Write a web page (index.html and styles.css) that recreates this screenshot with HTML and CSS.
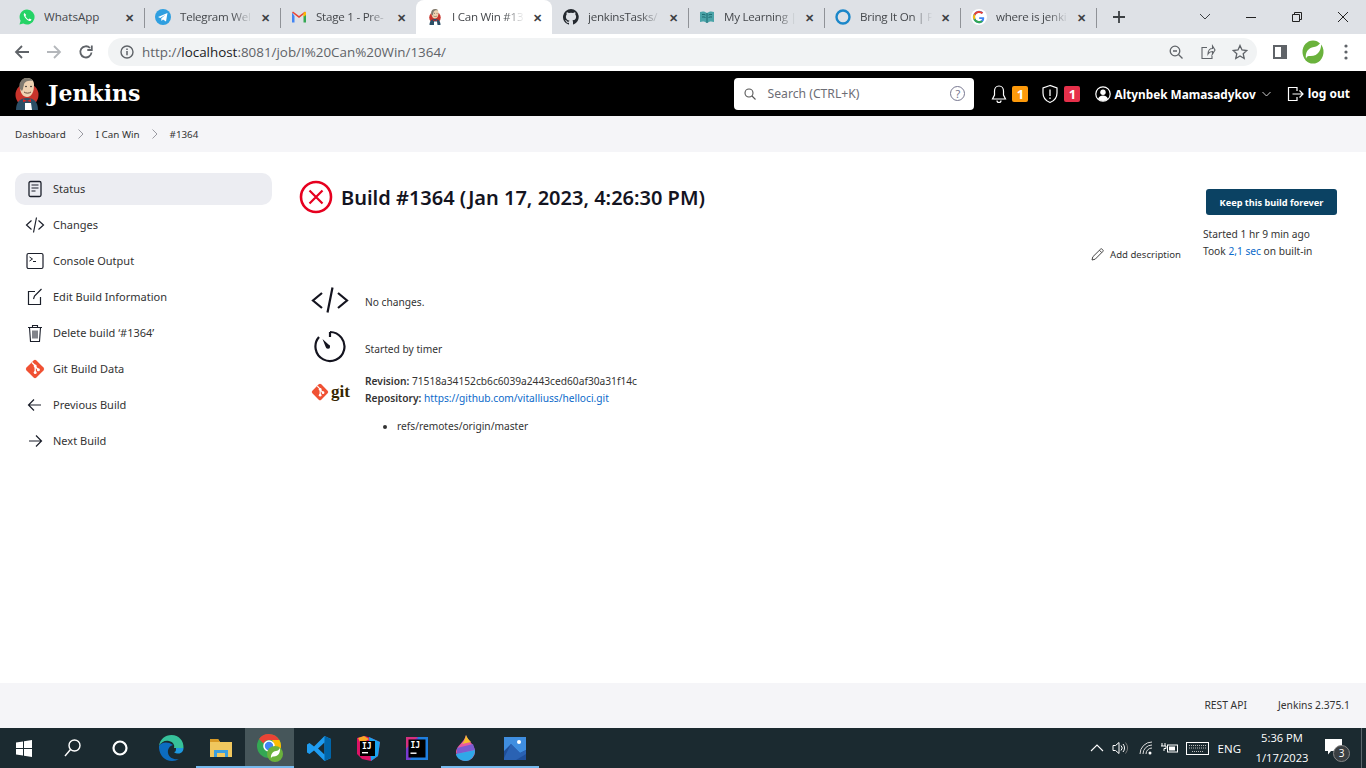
FILE: index.html
```html
<!DOCTYPE html>
<html>
	<head>
		<meta charset="UTF-8">
		<title>I Can Win #1364</title>
		<link rel="stylesheet" href="styles.css">
	</head>
	<body>
		<svg class="defs" width="0" height="0">
			<symbol id="butler" viewBox="0 0 24 32">
				<circle cx="12" cy="17" r="11.500" fill="#c8332b"/>
				<path d="M1 32c0-8 4-12 11-12s11 4 11 12z" fill="#2c4f66"/>
				<path d="M5 9c0-6 3-9 7-9s7 2 7 7c0 6-2 12-7 12-4 0-7-4-7-10z" fill="#eed2b2"/>
				<path d="M5 11C3 6 6 0 12 0c3 0 5 1 6 3-4-1-8 0-9 3 0 2-1 3-1 5l-1 2z" fill="#7f7a70"/>
				<path d="M8 21l4 2 4-2v3l-4-1-4 1z" fill="#d22"/>
				<path d="M9 14c2 1.500 5 1.500 7 0" fill="none" stroke="#5a3a2a" stroke-width=".9"/>
				<circle cx="11" cy="8.500" r=".8" fill="#222"/>
				<circle cx="16" cy="8.500" r=".8" fill="#222"/>
				<path d="M10 25h6l1 7h-7z" fill="#fff"/>
			</symbol>
			<symbol id="gitmark" viewBox="0 0 20 20">
				<rect x="3" y="3" width="14" height="14" rx="2" transform="rotate(45 10 10)" fill="#f05133"/>
				<path d="M7 3.500l3.200 3.200v7M10.200 7.500l3.200 3.200" fill="none" stroke="#fff" stroke-width="1.300"/>
				<circle cx="10.200" cy="7" r="1.500" fill="#fff"/>
				<circle cx="10.200" cy="13.500" r="1.500" fill="#fff"/>
				<circle cx="13.400" cy="10.700" r="1.500" fill="#fff"/>
			</symbol>
		</svg>

		<div class="tabstrip">
			<div class="tab">
				<svg class="favicon" viewBox="0 0 16 16"><path d="M8 .500a7.500 7.500 0 0 0-6.400 11.300L.5 15.500l3.800-1A7.500 7.500 0 1 0 8 .5z" fill="#25d366"/><path d="M5.500 4c-1 .7-1 2 0 3.800s2.800 3.700 4.700 4.200c1.200.3 2.200-.5 2.300-1.500l-2-1-.9 1C8.500 10 7 8.500 6.400 7l.8-1z" fill="#fff"/></svg>
				<span class="tab-title plain">WhatsApp</span><span class="tab-x">✕</span>
			</div>
			<div class="tab">
				<svg class="favicon" viewBox="0 0 16 16"><circle cx="8" cy="8" r="8" fill="#2f9fe0"/><path d="M3 8l9.500-4-1.500 8.500-3-2-1.500 1.500-.3-2.500 4.300-3.700-5.300 3.200z" fill="#fff"/></svg>
				<span class="tab-title">Telegram Wel</span><span class="tab-x">✕</span>
			</div>
			<div class="tab">
				<svg class="favicon" viewBox="0 0 16 16"><path d="M1 3.500v10h2.500V7z" fill="#4285f4"/><path d="M15 3.500v10h-2.500V7z" fill="#34a853"/><path d="M1 3.500L8 9l7-5.500-1-1-6 4.500-6-4.500z" fill="#ea4335"/><path d="M12.500 3.500L15 3v3l-2.500 2z" fill="#fbbc04"/></svg>
				<span class="tab-title">Stage 1 - Pre-</span><span class="tab-x">✕</span>
			</div>
			<div class="tab active">
				<svg class="favicon" viewBox="0 0 24 32"><use href="#butler"/></svg>
				<span class="tab-title">I Can Win #13</span><span class="tab-x">✕</span>
			</div>
			<div class="tab">
				<svg class="favicon" viewBox="0 0 16 16"><path d="M8 0a8 8 0 0 0-2.500 15.600c.4.100.5-.2.500-.4v-1.400c-2.200.5-2.700-1-2.700-1-.4-.9-.9-1.200-.9-1.200-.7-.5.100-.5.100-.5.800.1 1.200.8 1.200.8.700 1.200 1.900.9 2.300.7.100-.5.300-.9.500-1.100-1.800-.2-3.600-.9-3.600-4 0-.9.300-1.600.8-2.100-.1-.2-.4-1 .1-2.100 0 0 .7-.2 2.200.8a7.500 7.500 0 0 1 4 0c1.500-1 2.200-.8 2.200-.8.400 1.100.2 1.900.1 2.100.5.600.8 1.300.8 2.100 0 3.100-1.900 3.700-3.700 3.900.3.300.6.700.6 1.500v2.200c0 .2.100.5.500.4A8 8 0 0 0 8 0z" fill="#24292f"/></svg>
				<span class="tab-title">jenkinsTasks/</span><span class="tab-x">✕</span>
			</div>
			<div class="tab">
				<svg class="favicon" viewBox="0 0 16 16"><path d="M1 3c3-1 5-.5 7 1 2-1.500 4-2 7-1v10c-3-1-5-.5-7 1-2-1.500-4-2-7-1z" fill="#4aa3a8"/><path d="M8 4v10M3 5.500c1.500-.3 2.500 0 3.500.5M3 8c1.500-.3 2.500 0 3.500.5M9.500 6c1-.5 2-.8 3.500-.5M9.500 8.500c1-.5 2-.8 3.500-.5" stroke="#1d6b70" fill="none"/></svg>
				<span class="tab-title">My Learning |</span><span class="tab-x">✕</span>
			</div>
			<div class="tab">
				<svg class="favicon" viewBox="0 0 16 16"><circle cx="8" cy="8" r="6.500" fill="none" stroke="#1b87c9" stroke-width="2.400"/></svg>
				<span class="tab-title">Bring It On | P</span><span class="tab-x">✕</span>
			</div>
			<div class="tab">
				<svg class="favicon" viewBox="0 0 16 16"><circle cx="8" cy="8" r="8" fill="#fff"/><path d="M13 8.200H8.200v1.900H11c-.3 1.300-1.400 2.100-2.800 2.100a4.200 4.200 0 0 1 0-8.400c1 0 1.900.4 2.600 1l1.400-1.400A6.200 6.200 0 1 0 8.200 14.200c3.300 0 5-2.400 5-5 0-.4 0-.7-.2-1z" fill="#4285f4"/><path d="M2.700 5.100l1.700 1.200a4.200 4.200 0 0 1 6.400-1.300l1.400-1.400a6.200 6.200 0 0 0-9.500 1.500z" fill="#ea4335"/><path d="M4.200 9.400l-1.700 1.300a6.200 6.200 0 0 0 9.500 2l-1.700-1.300a4.200 4.200 0 0 1-6.100-2z" fill="#34a853"/><path d="M2.700 5.100a6.200 6.200 0 0 0 0 5.600l1.700-1.300a4.200 4.200 0 0 1 0-3.100z" fill="#fbbc04"/></svg>
				<span class="tab-title">where is jenki</span><span class="tab-x">✕</span>
			</div>
			<svg class="newtab" width="14" height="14" viewBox="0 0 14 14"><path d="M7 1v12M1 7h12" stroke="#3c4043" stroke-width="1.800"/></svg>
			<div class="winctl">
				<svg width="46" height="14" viewBox="0 0 46 14"><path d="M18 4l5 5 5-5" fill="none" stroke="#3c4043"/></svg>
				<svg width="46" height="14" viewBox="0 0 46 14"><path d="M18 7.500h10" stroke="#222"/></svg>
				<svg width="46" height="14" viewBox="0 0 46 14"><path d="M18.500 4.500h7v7h-7zM20.500 4.500v-2h7v7h-2" fill="none" stroke="#222"/></svg>
				<svg width="46" height="14" viewBox="0 0 46 14"><path d="M18 2l10 10M28 2L18 12" stroke="#222"/></svg>
			</div>
		</div>

		<div class="toolbar">
			<svg class="tool-btn" width="16" height="16" viewBox="0 0 16 16"><path d="M15 8H2M8 2L2 8l6 6" fill="none" stroke="#5f6368" stroke-width="1.800"/></svg>
			<svg class="tool-btn" width="16" height="16" viewBox="0 0 16 16"><path d="M1 8h13M8 2l6 6-6 6" fill="none" stroke="#b4b7bb" stroke-width="1.800"/></svg>
			<svg class="tool-btn" width="16" height="16" viewBox="0 0 16 16"><path d="M13.500 8.500A5.600 5.600 0 1 1 12 4M13.800 1.500V6H9.300" fill="none" stroke="#5f6368" stroke-width="1.800"/></svg>
			<div class="omnibox">
				<svg width="14" height="14" viewBox="0 0 14 14"><circle cx="7" cy="7" r="6" fill="none" stroke="#5f6368" stroke-width="1.400"/><path d="M7 6v4.200M7 3.500v1.500" stroke="#5f6368" stroke-width="1.500"/></svg>
				<span class="url"><span class="url-dim">http://</span>localhost<span class="url-dim">:8081/job/I%20Can%20Win/1364/</span></span>
				<svg class="omni-icon" width="16" height="16" viewBox="0 0 16 16"><circle cx="7" cy="7" r="4.800" fill="none" stroke="#5f6368" stroke-width="1.300"/><path d="M10.500 10.500L14.500 14.500M5 7h4" stroke="#5f6368" stroke-width="1.300"/></svg>
				<svg class="omni-icon" width="16" height="16" viewBox="0 0 16 16"><path d="M7 3.500H2v11h10v-4M8 10c0-4 2-5.500 4.500-5.500V2L15 6l-2.500 4V7.500C10.500 7.500 9 8.300 8 10z" fill="none" stroke="#5f6368" stroke-width="1.100"/></svg>
				<svg class="omni-icon" width="16" height="16" viewBox="0 0 16 16"><path d="M8 1.500l2 4.500 4.800.5-3.600 3.200 1 4.800L8 12l-4.200 2.500 1-4.800L1.200 6.500 6 6z" fill="none" stroke="#5f6368" stroke-width="1.300"/></svg>
			</div>
			<svg class="side-panel" width="14" height="14" viewBox="0 0 14 14"><rect x="1" y="1" width="12" height="12" fill="none" stroke="#5f6368" stroke-width="2"/><rect x="8" y="1" width="5" height="12" fill="#5f6368"/></svg>
			<svg class="spring-ext" width="22" height="24" viewBox="0 0 22 24"><ellipse cx="11" cy="12" rx="10.500" ry="11.500" fill="#6ab23c"/><path d="M19 2c1 8-3 15-12 14-2 0-3 2-3 3-1-7 2-11 8-12 3-.5 5-2 7-5z" fill="#fff"/></svg>
			<svg class="menu-dots" width="4" height="18" viewBox="0 0 4 18"><circle cx="2" cy="3" r="1.600" fill="#5f6368"/><circle cx="2" cy="9" r="1.600" fill="#5f6368"/><circle cx="2" cy="15" r="1.600" fill="#5f6368"/></svg>
		</div>

		<header class="jenkins-head">
			<svg class="head-logo" width="24" height="32" viewBox="0 0 24 32"><use href="#butler"/></svg>
			<span class="logotype">Jenkins</span>
			<div class="search">
				<svg width="12" height="12" viewBox="0 0 12 12"><circle cx="5" cy="5" r="4" fill="none" stroke="#555" stroke-width="1.100"/><path d="M8 8l3.500 3.500" stroke="#555" stroke-width="1.100"/></svg>
				<span class="search-text">Search (CTRL+K)</span>
				<span class="search-help">?</span>
			</div>
			<div class="head-item">
				<svg width="16" height="20" viewBox="0 0 16 20"><path d="M8 2c-3 0-4.500 2.500-4.500 5v4L1.500 15h13l-2-4V7C12.500 4.500 11 2 8 2zM6 16.500a2 2 0 0 0 4 0" fill="none" stroke="#fff" stroke-width="1.200"/></svg>
				<span class="badge badge-warn">1</span>
			</div>
			<div class="head-item">
				<svg width="18" height="20" viewBox="0 0 18 20"><path d="M9 1.500L2 4v5c0 5 3 8 7 9.500 4-1.500 7-4.500 7-9.500V4z" fill="none" stroke="#fff" stroke-width="1.200"/><path d="M9 5.500v6.500M9 13.500v1.500" stroke="#fff" stroke-width="1.300"/></svg>
				<span class="badge badge-danger">1</span>
			</div>
			<div class="head-user">
				<svg width="16" height="16" viewBox="0 0 16 16"><circle cx="8" cy="8" r="7.200" fill="none" stroke="#fff" stroke-width="1.200"/><circle cx="8" cy="6.300" r="2.700" fill="#fff"/><path d="M3 13c1-3 3-3.500 5-3.500s4 .5 5 3.500c-3 2.500-7 2.500-10 0z" fill="#fff"/></svg>
				<span>Altynbek Mamasadykov</span>
				<svg class="user-caret" width="9" height="6" viewBox="0 0 9 6"><path d="M.5 1l4 4 4-4" fill="none" stroke="#ccc"/></svg>
			</div>
			<div class="head-logout">
				<svg width="17" height="16" viewBox="0 0 17 16"><path d="M10 5V1.500H1.500v13H10V11M5.500 8H16M12.500 4.500L16 8l-3.500 3.500" fill="none" stroke="#fff" stroke-width="1.200"/></svg>
				<span>log out</span>
			</div>
		</header>

		<nav class="crumbs">
			<span>Dashboard</span>
			<svg class="crumb-sep" width="6" height="10" viewBox="0 0 6 10"><path d="M.5.500L5 5 .5 9.500" fill="none" stroke="#9a9aa2"/></svg>
			<span>I Can Win</span>
			<svg class="crumb-sep" width="6" height="10" viewBox="0 0 6 10"><path d="M.5.500L5 5 .5 9.500" fill="none" stroke="#9a9aa2"/></svg>
			<span>#1364</span>
		</nav>

		<main class="page">
			<aside class="sidebar">
				<div class="side-item current">
					<svg width="20" height="20" viewBox="0 0 20 20"><rect x="4" y="2.500" width="12" height="15" rx="1.500" fill="none" stroke="#1b1f2a" stroke-width="1.300"/><path d="M6.500 6h7M6.500 9h7M6.500 12h4" stroke="#1b1f2a" stroke-width="1.100"/></svg>
					<span>Status</span>
				</div>
				<div class="side-item">
					<svg width="20" height="20" viewBox="0 0 20 20"><path d="M6.500 5.500L1.500 10l5 4.500M13.500 5.500l5 4.500-5 4.500M11.500 2.500l-3 15" fill="none" stroke="#1b1f2a" stroke-width="1.200"/></svg>
					<span>Changes</span>
				</div>
				<div class="side-item">
					<svg width="20" height="20" viewBox="0 0 20 20"><rect x="2" y="2.500" width="16" height="15" rx="1.500" fill="none" stroke="#1b1f2a" stroke-width="1.200"/><path d="M4.500 6l3 2-3 2M8 10.500h3" fill="none" stroke="#1b1f2a" stroke-width="1"/></svg>
					<span>Console Output</span>
				</div>
				<div class="side-item">
					<svg width="20" height="20" viewBox="0 0 20 20"><path d="M10 4.500H3.500v13h12V10" fill="none" stroke="#1b1f2a" stroke-width="1.200"/><path d="M8.500 12l1 -3 7 -7" fill="none" stroke="#1b1f2a" stroke-width="1.200"/></svg>
					<span>Edit Build Information</span>
				</div>
				<div class="side-item">
					<svg width="20" height="20" viewBox="0 0 20 20"><path d="M3 4.500h14M7.500 4.500V2.500h5v2M4.500 4.500l1 14h9l1-14M8 7.500v8M10 7.500v8M12 7.500v8" fill="none" stroke="#1b1f2a" stroke-width="1.100"/></svg>
					<span>Delete build ‘#1364’</span>
				</div>
				<div class="side-item">
					<svg width="20" height="20" viewBox="0 0 20 20"><use href="#gitmark"/></svg>
					<span>Git Build Data</span>
				</div>
				<div class="side-item">
					<svg width="20" height="20" viewBox="0 0 20 20"><path d="M16 10H3.500M9 4.500L3.500 10 9 15.500" fill="none" stroke="#1b1f2a" stroke-width="1.200"/></svg>
					<span>Previous Build</span>
				</div>
				<div class="side-item">
					<svg width="20" height="20" viewBox="0 0 20 20"><path d="M4 10h12.500M11 4.500l5.500 5.500-5.500 5.500" fill="none" stroke="#1b1f2a" stroke-width="1.200"/></svg>
					<span>Next Build</span>
				</div>
			</aside>

			<section class="content">
				<div class="build-head">
					<svg width="34" height="34" viewBox="0 0 34 34"><circle cx="17" cy="17" r="15" fill="none" stroke="#e6001f" stroke-width="2.600"/><path d="M10.500 10.500l13 13M23.500 10.500l-13 13" stroke="#e6001f" stroke-width="2.200"/></svg>
					<h1>Build #1364 (Jan 17, 2023, 4:26:30 PM)</h1>
					<div class="build-side">
						<button class="keep-btn">Keep this build forever</button>
						<div class="build-meta">
							<div>Started 1 hr 9 min ago</div>
							<div>Took <a>2,1 sec</a> on built-in</div>
						</div>
					</div>
				</div>
				<div class="add-desc">
					<svg width="13" height="13" viewBox="0 0 13 13"><path d="M1 12l.8-3.200L9.500 1.200a1.200 1.200 0 0 1 1.700 0l.6.6a1.200 1.200 0 0 1 0 1.700L4.200 11.200zM8.500 2.300l2.200 2.200" fill="none" stroke="#444" stroke-width="1"/></svg>
					<span>Add description</span>
				</div>
				<div class="info-row row-changes">
					<svg width="38" height="28" viewBox="0 0 38 28"><path d="M11 7L2 14.500l9 7.500M27 7l9 7.500-9 7.500M21.500 1.500l-5 25" fill="none" stroke="#14141f" stroke-width="2.200"/></svg>
					<div>No changes.</div>
				</div>
				<div class="info-row row-timer">
					<svg width="34" height="34" viewBox="0 0 34 34"><path d="M17 3a14.500 14.500 0 1 1-11 5" fill="none" stroke="#14141f" stroke-width="2.200"/><path d="M17 3v5" stroke="#14141f" stroke-width="2.200"/><path d="M9.500 10l6 5.500a2.200 2.200 0 1 1-2.800 2.500z" fill="#14141f"/></svg>
					<div>Started by timer</div>
				</div>
				<div class="info-row row-git">
					<div class="git-logo">
						<svg width="18" height="18" viewBox="0 0 20 20"><use href="#gitmark"/></svg>
						<span>git</span>
					</div>
					<div class="git-lines">
						<div><b>Revision:</b> 71518a34152cb6c6039a2443ced60af30a31f14c</div>
						<div><b>Repository:</b> <a>https://github.com/vitalliuss/helloci.git</a></div>
						<ul>
							<li>refs/remotes/origin/master</li>
						</ul>
					</div>
				</div>
			</section>
		</main>

		<footer class="foot">
			<span>REST API</span>
			<span>Jenkins 2.375.1</span>
		</footer>

		<div class="taskbar">
			<div class="task-btn">
				<svg width="16" height="17" viewBox="0 0 16 17"><path d="M0 2.500l7-1v6.500H0zM8 1.300L16 0v8H8zM0 9h7v6.500l-7-1zM8 9h8v8l-8-1.300z" fill="#fff"/></svg>
			</div>
			<div class="task-btn">
				<svg width="17" height="18" viewBox="0 0 17 18"><circle cx="10.500" cy="6.500" r="5.500" fill="none" stroke="#fff" stroke-width="1.400"/><path d="M6.500 10.500L1 17" stroke="#fff" stroke-width="1.400"/></svg>
			</div>
			<div class="task-btn">
				<svg width="16" height="16" viewBox="0 0 16 16"><circle cx="8" cy="8" r="6.500" fill="none" stroke="#fff" stroke-width="2.200"/></svg>
			</div>
			<div class="task-btn app">
				<svg width="25" height="26" viewBox="0 0 25 26"><path d="M12.500 0C6 0 .8 4.500 0 11c2-4 6-6 10-5 4 1 6 4 5 7h9.500C25 6 20 0 12.500 0z" fill="#36c19a"/><path d="M0 11c-.5 8 5 15 13 15 3 0 5-1 7-2-5 1-10-1-11-6-.5-3 1-7 5-8-5-4-12-3-14 1z" fill="#0c6cc0"/><path d="M24.500 13c0 3-2 5.500-5 5.500-2 0-3.500-.5-4.500-1.500 2 0 2-2 2-4z" fill="#1d98e0"/></svg>
			</div>
			<div class="task-btn app running">
				<svg width="22" height="20" viewBox="0 0 22 20"><path d="M0 1h8l2 3h12v15H0z" fill="#f0c75e"/><path d="M0 1h8l2 3H0z" fill="#d99a26"/><path d="M4 12h14v7h-3v-4H7v4H4z" fill="#3a9fe0"/></svg>
			</div>
			<div class="task-btn app running current-app">
				<svg width="26" height="28" viewBox="0 0 26 28"><circle cx="12" cy="12" r="12" fill="#34a853"/><path d="M12 0a12 12 0 0 1 10.400 6H12a6 6 0 0 0-5.500 3.500L2 5a12 12 0 0 1 10-5z" fill="#ea4335"/><path d="M22.400 6a12 12 0 0 1-5 16.700L12 18a6 6 0 0 0 5-6c0-2-1-4.500-2-6z" fill="#fbbc04"/><circle cx="12" cy="12" r="5" fill="#4285f4" stroke="#fff" stroke-width="1.600"/><circle cx="18" cy="20" r="8" fill="#6ab23c"/><path d="M23 14c.5 5-2 9-7 8.500-1 0-2 1-2 2-.5-4 1.500-7 5-7.500 1.500-.3 3-1 4-3z" fill="#fff"/></svg>
			</div>
			<div class="task-btn app">
				<svg width="24" height="25" viewBox="0 0 24 25"><path d="M17.500 0L24 3v19l-6.500 3L7 14.500 2.500 18 0 16.500V8.500L2.500 7 7 10.500z" fill="#1f9cf0"/><path d="M17.500 6.500l-6.500 6 6.500 6z" fill="#1b2a30"/><path d="M17.500 0v25L24 22V3z" fill="#0065a9"/></svg>
			</div>
			<div class="task-btn app">
				<svg width="24" height="25" viewBox="0 0 24 25"><path d="M1 2l8-2 6 2 9 4-2 14-7 5-9-2-5-5z" fill="#dd1265"/><path d="M13 1l11 5-2 14-7 5z" fill="#1aa3f0"/><path d="M2 2l6-2 5 3-8 5z" fill="#f9a825"/><rect x="4" y="5" width="15" height="15" fill="#000"/><text class="ij" x="6" y="13">IJ</text><rect x="6" y="16" width="6" height="1.400" fill="#fff"/></svg>
			</div>
			<div class="task-btn app">
				<svg width="22" height="23" viewBox="0 0 22 23"><rect width="22" height="23" fill="#1f7fe0"/><path d="M0 0h12L0 12z" fill="#d6307f"/><path d="M0 12L12 0v4L4 23H0z" fill="#7a3bd0"/><rect x="2.500" y="2.500" width="17" height="18" fill="#000"/><text class="ij" x="4.500" y="10.500">IJ</text><rect x="4.500" y="15.500" width="6" height="1.400" fill="#fff"/></svg>
			</div>
			<div class="task-btn app running">
				<svg width="19" height="26" viewBox="0 0 19 26"><path d="M10 0c1 5 9 9 9 17a9.500 9 0 0 1-19 0C0 11 8 8 10 0z" fill="#e85aa0"/><path d="M10 0c1 3 3 5 5 7l-9 2c2-2 3-5 4-9z" fill="#f5c02c"/><path d="M1 13l16-4 2 6-18 4z" fill="#7d5bd0"/><path d="M0 19l19-4c0 6-4 11-9.500 11S0 22 0 19z" fill="#2fa8e8"/></svg>
			</div>
			<div class="task-btn app running">
				<svg width="22" height="23" viewBox="0 0 22 23"><rect width="22" height="23" fill="#3f8ee0"/><path d="M0 23V14l7-7 9 9 6-3v10z" fill="#1f4f9a"/><path d="M7 7l9 9 6-3v4L12 23H0v-2z" fill="#2a62b3"/><circle cx="15" cy="5" r="2" fill="#fff"/></svg>
			</div>
			<div class="tray">
				<svg class="tray-chev" width="14" height="8" viewBox="0 0 14 8"><path d="M1 7l6-6 6 6" fill="none" stroke="#fff" stroke-width="1.100"/></svg>
				<svg class="tray-vol" width="17" height="14" viewBox="0 0 17 14"><path d="M1 4.500h2.500L7 1.500v11l-3.500-3H1zM9 4.500a3.500 3.500 0 0 1 0 5M11 3a6 6 0 0 1 0 8" fill="none" stroke="#fff"/><path d="M13.500 1.500a9 9 0 0 1 0 11" fill="none" stroke="#777"/></svg>
				<svg class="tray-wifi" width="14" height="14" viewBox="0 0 14 14"><path d="M1 13A12 12 0 0 1 13 1M4 13a9 9 0 0 1 9-9M7 13a6 6 0 0 1 6-6" fill="none" stroke="#ddd"/><circle cx="11" cy="12" r="1.500" fill="#fff"/></svg>
				<svg class="tray-batt" width="18" height="12" viewBox="0 0 18 12"><path d="M1 1v3M4 1v3M0 4h5v2.500H3V9" fill="none" stroke="#fff"/><rect x="6.500" y="3" width="10" height="7" fill="none" stroke="#fff"/><rect x="8" y="4.500" width="6" height="4" fill="#fff"/></svg>
				<svg class="tray-kbd" width="23" height="13" viewBox="0 0 23 13"><rect x=".5" y=".5" width="22" height="12" fill="none" stroke="#fff"/><path d="M3 3.500h17M3 6h17M6 9.500h11" stroke="#bbb" stroke-dasharray="1 1"/></svg>
				<span class="tray-lang">ENG</span>
				<div class="clock">
					<div>5:36 PM</div>
					<div>1/17/2023</div>
				</div>
				<div class="notify">
					<svg width="17" height="16" viewBox="0 0 17 16"><path d="M0 0h17v12H6l-3 3.500V12H0z" fill="#fff"/></svg>
					<span class="notify-count">3</span>
				</div>
				<div class="show-desktop"></div>
			</div>
		</div>
	</body>
</html>
```

FILE: styles.css
```css
* {
	padding: 0;
	margin: 0;
	box-sizing: border-box;
}

html, body {
	height: 100%;
	overflow: hidden;
}

body {
	width: 1366px;
	height: 768px;
	display: flex;
	flex-direction: column;
	font-family: "Noto Sans", "Liberation Sans", sans-serif;
	color: #333;
	background: #fff;
}

.defs {
	position: absolute;
}

svg {
	flex-shrink: 0;
}

/* browser chrome */
.tabstrip {
	height: 34px;
	flex-shrink: 0;
	background: #dee1e6;
	display: flex;
	align-items: center;
	padding-left: 8px;
	font: 11.600px "Open Sans", "Liberation Sans", sans-serif;
	color: #45484c;
}

.tab {
	width: 136px;
	height: 34px;
	display: flex;
	align-items: center;
	padding: 0 8px 0 11px;
	position: relative;
	flex-shrink: 0;
}

.tab::after {
	content: "";
	position: absolute;
	right: -1px;
	top: 8px;
	height: 20px;
	width: 1px;
	background: #8f9297;
}

.tab.active {
	background: #fff;
	border-radius: 8px 8px 0 0;
}

.tab.active::after, .tab:nth-child(3)::after {
	display: none;
}

.favicon {
	width: 16px;
	height: 16px;
	margin-right: 9px;
}

.tab-title {
	flex: 1;
	overflow: hidden;
	white-space: nowrap;
	letter-spacing: -.25px;
	padding-bottom: 2px;
	-webkit-mask-image: linear-gradient(90deg, #000 70%, transparent 98%);
	mask-image: linear-gradient(90deg, #000 70%, transparent 98%);
}

.tab-title.plain {
	letter-spacing: 0;
	-webkit-mask-image: none;
	mask-image: none;
}

.tab-x {
	width: 14px;
	font-size: 11px;
	font-weight: 700;
	text-align: center;
	color: #3c4043;
	margin-left: 4px;
}

.newtab {
	margin-left: 16px;
}

.winctl {
	margin-left: auto;
	display: flex;
}

.toolbar {
	height: 36px;
	flex-shrink: 0;
	background: #fff;
	display: flex;
	align-items: center;
	padding-left: 14px;
}

.tool-btn {
	margin-right: 16px;
}

.omnibox {
	width: 1149px;
	height: 28px;
	margin-left: -2px;
	background: #f1f3f4;
	border-radius: 14px;
	display: flex;
	align-items: center;
	padding: 0 9px 0 12px;
	font: 13.400px "Open Sans", "Liberation Sans", sans-serif;
}

.url {
	margin-left: 8px;
	flex: 1;
	color: #202124;
}

.url-dim {
	color: #5f6368;
}

.omni-icon {
	margin-left: 16px;
}

.side-panel {
	margin-left: 16px;
}

.spring-ext {
	margin-left: 15px;
}

.menu-dots {
	margin-left: 20px;
}

/* jenkins header */
.jenkins-head {
	height: 46px;
	flex-shrink: 0;
	background: #000;
	border-top: 1px solid #fff;
	display: flex;
	align-items: center;
	padding: 0 16px 0 15px;
	color: #fff;
	font-size: 13px;
}

.logotype {
	font: 700 22px "DejaVu Serif", "Liberation Serif", serif;
	margin-left: 9px;
	padding-bottom: 2px;
}

.search {
	width: 240px;
	height: 32px;
	margin-left: auto;
	background: #fff;
	border-radius: 4px;
	display: flex;
	align-items: center;
	padding: 0 9px 0 10px;
	color: #6d6d75;
	font-size: 12.200px;
}

.search-text {
	margin-left: 11px;
	flex: 1;
}

.search-help {
	width: 15px;
	height: 15px;
	border: 1px solid #777790;
	border-radius: 50%;
	font-size: 11px;
	line-height: 13px;
	text-align: center;
	color: #777790;
}

.head-item {
	display: flex;
	align-items: center;
	margin-left: 17px;
	gap: 5px;
}

.head-item + .head-item {
	margin-left: 13px;
}

.badge {
	width: 16px;
	height: 16px;
	border-radius: 2px;
	font-size: 13px;
	font-weight: 700;
	line-height: 16px;
	text-align: center;
	color: #fff;
}

.badge-warn {
	background: #fe9a0b;
}

.badge-danger {
	background: #e6304a;
}

.head-user {
	display: flex;
	align-items: center;
	margin-left: 15px;
	font-weight: 700;
	font-size: 11.800px;
	white-space: nowrap;
}

.head-user span {
	margin-left: 3px;
}

.user-caret {
	margin-left: 6px;
}

.head-logout {
	display: flex;
	align-items: center;
	margin-left: 16px;
	font-weight: 700;
	font-size: 12px;
}

.head-logout span {
	margin-left: 4px;
}

.crumbs {
	height: 36px;
	flex-shrink: 0;
	background: #f5f5f8;
	display: flex;
	align-items: center;
	padding-left: 15px;
	font-size: 9.800px;
	color: #333;
}

.crumb-sep {
	margin: 0 12px;
}

/* page */
.page {
	flex: 1;
	display: flex;
	min-height: 0;
}

.sidebar {
	width: 272px;
	padding: 21px 0 0 15px;
	flex-shrink: 0;
	display: flex;
	flex-direction: column;
	gap: 4px;
	font-size: 11px;
	color: #333;
}

.side-item {
	height: 32px;
	display: flex;
	align-items: center;
	padding-left: 10px;
	gap: 8px;
	border-radius: 10px;
}

.side-item span {
	padding-bottom: 2px;
}

.side-item.current {
	background: #ecedf2;
}

.content {
	flex: 1;
	padding: 0 29px 0 27px;
	font-size: 10.200px;
	color: #333;
}

.build-head {
	display: flex;
	align-items: flex-start;
	padding-top: 28px;
	height: 94px;
}

.build-head h1 {
	font-size: 20px;
	font-weight: 600;
	color: #14141f;
	margin-left: 8px;
	line-height: 36px;
	white-space: nowrap;
}

.build-side {
	margin-left: auto;
	margin-top: 9px;
	width: 134px;
}

.keep-btn {
	display: block;
	width: 131px;
	height: 26px;
	margin-left: 3px;
	background: #0b4263;
	color: #fff;
	border: none;
	border-radius: 3px;
	font: 700 9.200px "Noto Sans", sans-serif;
}

.build-meta {
	margin-top: 11px;
	line-height: 17px;
}

.build-meta a, .git-lines a {
	color: #0b6aca;
}

.add-desc {
	display: flex;
	align-items: center;
	justify-content: flex-end;
	gap: 6px;
	margin: 1px 156px 0 0;
	height: 14px;
	font-size: 9.600px;
}

.info-row {
	display: flex;
	align-items: center;
}

.info-row > svg, .git-logo {
	width: 38px;
	margin-left: 12px;
	margin-right: 16px;
}

.row-changes {
	margin-top: 26px;
	height: 30px;
}

.row-changes > svg {
	margin-bottom: 4px;
}

.row-timer {
	margin-top: 15px;
	height: 34px;
}

.row-timer > svg {
	margin-bottom: 6px;
}

.row-git {
	margin-top: 7px;
	align-items: flex-start;
}

.git-logo {
	display: flex;
	align-items: center;
	margin-top: 9px;
}

.git-logo span {
	font: 700 17px "Liberation Serif", serif;
	color: #362701;
	margin-left: 2px;
}

.git-lines {
	line-height: 17px;
}

.git-lines b {
	font-weight: 600;
}

.git-lines ul {
	margin: 11px 0 0 32px;
}

/* footer */
.foot {
	height: 45px;
	flex-shrink: 0;
	background: #f5f5f8;
	display: flex;
	align-items: center;
	justify-content: flex-end;
	gap: 31px;
	padding: 0 16px 2px 0;
	font-size: 10.300px;
	color: #333;
}

/* windows taskbar */
.taskbar {
	height: 40px;
	flex-shrink: 0;
	background: #1b2a30;
	display: flex;
	align-items: stretch;
}

.task-btn {
	width: 48px;
	display: flex;
	align-items: center;
	justify-content: center;
}

.task-btn.app {
	width: 49px;
}

.task-btn:nth-child(4) {
	margin-left: 3px;
}

.running {
	box-shadow: inset 0 -2px 0 #76b9ed;
}

.current-app {
	background: #46565a;
}

.ij {
	font: 700 8px "DejaVu Sans Mono", monospace;
	fill: #fff;
}

.tray {
	margin-left: auto;
	display: flex;
	align-items: center;
	color: #fff;
}

.tray-vol {
	margin-left: 8px;
}

.tray-wifi {
	margin-left: 10px;
}

.tray-batt {
	margin-left: 8px;
}

.tray-kbd {
	margin-left: 7px;
}

.tray-lang {
	margin-left: 9px;
	font: 11.500px "Open Sans", sans-serif;
}

.clock {
	margin-left: 11px;
	width: 60px;
	text-align: center;
	font: 11.200px/20px "Open Sans", sans-serif;
}

.notify {
	margin-left: 13px;
	width: 36px;
	height: 28px;
	position: relative;
	padding: 4px 0 0 0;
}

.notify-count {
	position: absolute;
	left: 8px;
	bottom: 0;
	width: 17px;
	height: 17px;
	border-radius: 50%;
	background: #3a3f42;
	border: 1px solid #888;
	font: 10px/15px "Open Sans", sans-serif;
	text-align: center;
}

.show-desktop {
	width: 5px;
	align-self: stretch;
	border-left: 1px solid #5b686d;
}
```
